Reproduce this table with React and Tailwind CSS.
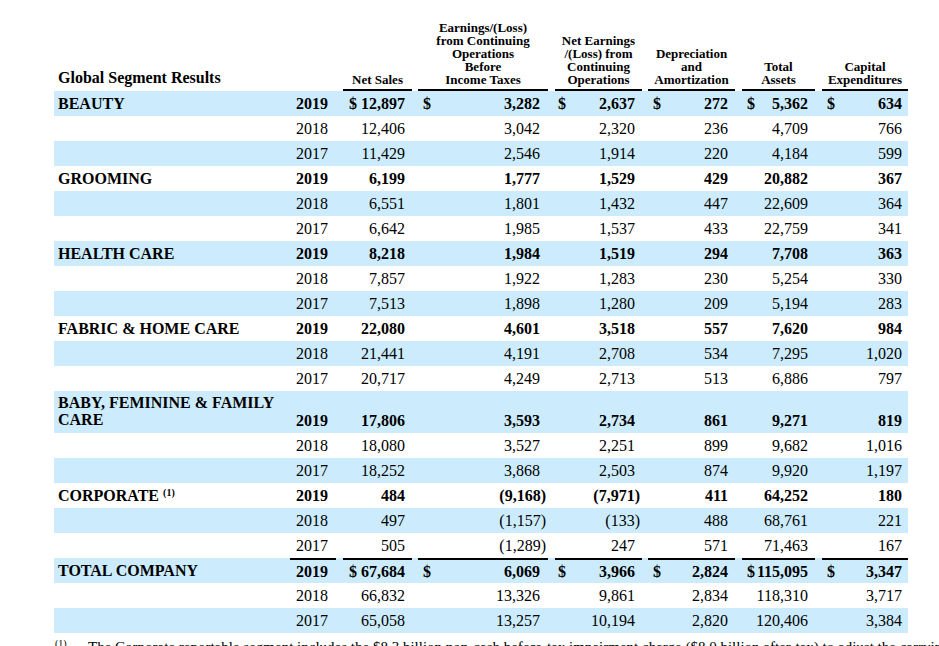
import React from "react";

const colW = [
  "w-[46px]",
  "ml-[7px] w-[69px]",
  "ml-[6px] w-[130px]",
  "ml-[7px] w-[87px]",
  "ml-[6px] w-[87px]",
  "ml-[7px] w-[73px]",
  "ml-[7px] w-[86px]",
];
const padL = ["", "", "pl-[5px]", "pl-[3px]", "pl-[5px]", "pl-[5px]", "pl-[5px]"];
const padR = ["pr-[8px]", "pr-[7px]", "pr-[8px]", "pr-[7px]", "pr-[7px]", "pr-[7px]", "pr-[6px]"];
const padRNeg = ["pr-[8px]", "pr-[7px]", "pr-[2px]", "pr-[2px]", "pr-[7px]", "pr-[7px]", "pr-[6px]"];

const segments = [
  {
    label: "BEAUTY",
    dollars: true,
    years: [
      ["2019", "$ 12,897", "3,282", "2,637", "272", "5,362", "634"],
      ["2018", "12,406", "3,042", "2,320", "236", "4,709", "766"],
      ["2017", "11,429", "2,546", "1,914", "220", "4,184", "599"],
    ],
  },
  {
    label: "GROOMING",
    years: [
      ["2019", "6,199", "1,777", "1,529", "429", "20,882", "367"],
      ["2018", "6,551", "1,801", "1,432", "447", "22,609", "364"],
      ["2017", "6,642", "1,985", "1,537", "433", "22,759", "341"],
    ],
  },
  {
    label: "HEALTH CARE",
    years: [
      ["2019", "8,218", "1,984", "1,519", "294", "7,708", "363"],
      ["2018", "7,857", "1,922", "1,283", "230", "5,254", "330"],
      ["2017", "7,513", "1,898", "1,280", "209", "5,194", "283"],
    ],
  },
  {
    label: "FABRIC & HOME CARE",
    years: [
      ["2019", "22,080", "4,601", "3,518", "557", "7,620", "984"],
      ["2018", "21,441", "4,191", "2,708", "534", "7,295", "1,020"],
      ["2017", "20,717", "4,249", "2,713", "513", "6,886", "797"],
    ],
  },
  {
    label: "BABY, FEMININE & FAMILY",
    label2: "CARE",
    years: [
      ["2019", "17,806", "3,593", "2,734", "861", "9,271", "819"],
      ["2018", "18,080", "3,527", "2,251", "899", "9,682", "1,016"],
      ["2017", "18,252", "3,868", "2,503", "874", "9,920", "1,197"],
    ],
  },
  {
    label: "CORPORATE",
    note: true,
    years: [
      ["2019", "484", "(9,168)", "(7,971)", "411", "64,252", "180"],
      ["2018", "497", "(1,157)", "(133)", "488", "68,761", "221"],
      ["2017", "505", "(1,289)", "247", "571", "71,463", "167"],
    ],
  },
  {
    label: "TOTAL COMPANY",
    dollars: true,
    total: true,
    years: [
      ["2019", "$ 67,684", "6,069", "3,966", "2,824", "115,095", "3,347"],
      ["2018", "66,832", "13,326", "9,861", "2,834", "118,310", "3,717"],
      ["2017", "65,058", "13,257", "10,194", "2,820", "120,406", "3,384"],
    ],
  },
];

const Cell = ({ i, text, dollar, extra }) => {
  const neg = text.startsWith("(") && text.endsWith(")");
  return (
    <div
      className={`flex justify-between shrink-0 ${colW[i]} ${padL[i]} ${
        neg ? padRNeg[i] : padR[i]
      } ${extra}`}
    >
      <span>{dollar && i >= 2 ? "$" : ""}</span>
      <span className={i === 1 ? "whitespace-pre" : ""}>{text}</span>
    </div>
  );
};

const App = () => {
  let stripe = 0;
  return (
    <div className="w-[939px] h-[646px] overflow-hidden bg-white text-black font-['Liberation_Serif',serif]">
      <div className="pl-[54px] w-[908px]">
        {/* Header */}
        <div className="flex items-end h-[91px] font-bold">
          <div className="w-[236px] shrink-0 pl-[4px] pb-[4px] text-[16px] leading-[18px]">
            Global Segment Results
          </div>
          <div className="w-[46px] shrink-0" />
          {[
            ["Net Sales"],
            ["Earnings/(Loss)", "from Continuing", "Operations", "Before", "Income Taxes"],
            ["Net Earnings", "/(Loss) from", "Continuing", "Operations"],
            ["Depreciation", "and", "Amortization"],
            ["Total", "Assets"],
            ["Capital", "Expenditures"],
          ].map((lines, k) => (
            <div
              key={k}
              className={`shrink-0 ${colW[k + 1]} border-b-2 border-black pb-[3px] text-center text-[13px] leading-[13px]`}
            >
              {lines.map((l, j) => (
                <div key={j}>{l}</div>
              ))}
            </div>
          ))}
        </div>

        {/* Body */}
        {segments.map((seg, s) =>
          seg.years.map((r, y) => {
            const blue = stripe++ % 2 === 0;
            const first = y === 0;
            const tall = !!seg.label2 && first;
            const lineTop = seg.total && first;
            return (
              <div
                key={`${s}-${y}`}
                className={`flex text-[16px] ${tall ? "h-[42px]" : "h-[25px]"} ${
                  blue ? "bg-[#ccecfd]" : "bg-white"
                } ${first ? "font-bold" : ""}`}
              >
                <div
                  className={`w-[236px] shrink-0 pl-[4px] font-bold ${
                    tall ? "pt-[3px] leading-[17px]" : "leading-[25px]"
                  }`}
                >
                  {first && seg.label}
                  {first && seg.note && (
                    <sup className="text-[10px] ml-[4px]">(1)</sup>
                  )}
                  {first && seg.label2 && (
                    <>
                      <br />
                      {seg.label2}
                    </>
                  )}
                </div>
                {r.map((t, i) => (
                  <Cell
                    key={i}
                    i={i}
                    text={t}
                    dollar={seg.dollars && first}
                    extra={
                      tall
                        ? "self-end pb-[4px] leading-[17px]"
                        : lineTop
                        ? "border-t-2 border-black leading-[23px]"
                        : "leading-[25px]"
                    }
                  />
                ))}
              </div>
            );
          })
        )}

        {/* Footnote */}
        <div className="flex mt-[5px] text-[15px] leading-[18px] whitespace-nowrap">
          <div className="w-[34px] shrink-0 pl-[1px]">
            <sup className="text-[10px]">(1)</sup>
          </div>
          <div>
            The Corporate reportable segment includes the $8.3 billion non-cash before-tax impairment
            charge ($8.0 billion after-tax) to adjust the carrying value
          </div>
        </div>
      </div>
    </div>
  );
};

export default App;
